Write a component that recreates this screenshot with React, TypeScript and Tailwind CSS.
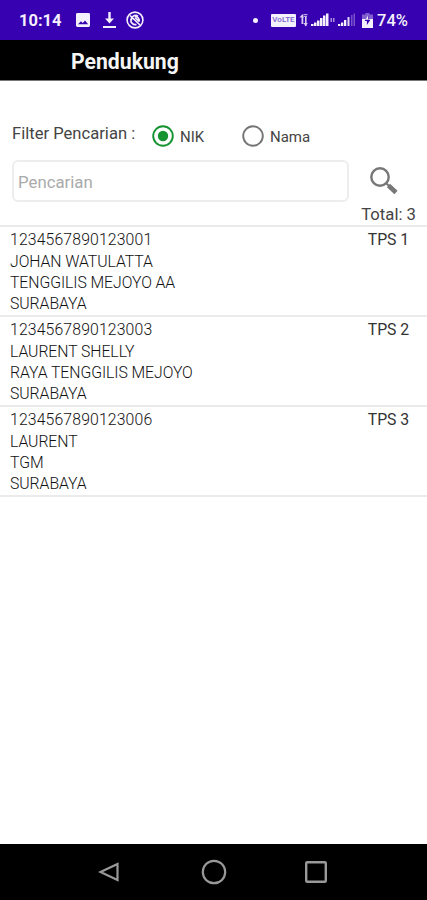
import React from 'react';

interface Supporter {
  nik: string;
  name: string;
  address: string;
  city: string;
  tps: string;
}

const supporters: Supporter[] = [
  {
    nik: '1234567890123001',
    name: 'JOHAN WATULATTA',
    address: 'TENGGILIS MEJOYO AA',
    city: 'SURABAYA',
    tps: 'TPS 1',
  },
  {
    nik: '1234567890123003',
    name: 'LAURENT SHELLY',
    address: 'RAYA TENGGILIS MEJOYO',
    city: 'SURABAYA',
    tps: 'TPS 2',
  },
  {
    nik: '1234567890123006',
    name: 'LAURENT',
    address: 'TGM',
    city: 'SURABAYA',
    tps: 'TPS 3',
  },
];

const StatusBar: React.FC = () => (
  <div className="flex h-10 shrink-0 items-center bg-[#3700b0] pl-[19px] text-[#f4f0fc]">
    <span className="w-[43px] pt-[2px] text-[16.5px] font-bold leading-5 whitespace-nowrap">10:14</span>
    <svg className="ml-3.5 h-[14px] w-[14px]" viewBox="0 0 15 15" fill="currentColor">
      <path
        fillRule="evenodd"
        d="M1.5 0h12A1.5 1.5 0 0 1 15 1.5v12a1.5 1.5 0 0 1-1.5 1.5h-12A1.5 1.5 0 0 1 0 13.5v-12A1.5 1.5 0 0 1 1.5 0ZM2.2 12h10.8L9.7 8 7.2 10.8 5.3 8.8Z"
      />
    </svg>
    <svg className="ml-[13px] h-4 w-[13px]" viewBox="0 0 13 16" fill="currentColor">
      <path d="M5.3 0h2.4v6.5h3.3L6.5 11.5 2 6.5h3.3ZM0 14h13v2H0Z" />
    </svg>
    <svg className="ml-[10px] h-[18px] w-[18px]" viewBox="0 0 18 18" fill="none" stroke="currentColor">
      <circle cx="9" cy="9" r="7.9" strokeWidth="1.6" />
      <path d="M4 4.5 14 14M5.5 9.5a4 4 0 0 1 6.5-4M9 5.5a4 4 0 0 1 4 5M5 8a4.5 4.5 0 0 0 5.5 5.5M9 6.5l4 4" strokeWidth="1.7" />
    </svg>
    <span className="ml-[109px] h-[5px] w-[5px] rounded-full bg-current" />
    <span className="ml-[13px] flex h-[13px] w-[25px] items-center justify-center rounded-[1px] bg-current">
      <span className="text-[8px] font-medium leading-none text-[#7b62cf]">VoLTE</span>
    </span>
    <svg className="ml-[3px] h-4 w-[59px]" viewBox="0 0 59 16" fill="currentColor">
      <path d="M2.5 3h1.8v9H2.5zM.5 5.5 3.4 2l1.6 3.5zM6 5h1.6v9H6zM4.5 11h4.3L6.7 14.5z" opacity=".85" />
      <path d="M4.5 2h4v1.2h-4zM5 4h3v1H5z" opacity=".7" />
      <path d="M12 12h2.5v2H12zM15 10.5h2.5V14H15zM18 8.5h2.5V14H18zM21 6h2.5v8H21zM24 3.5h2.5V14H24zM27 1.5h2.5V14H27z" />
      <path d="M31.5 6h1.5v4h-1.5zM34 6h1.5v4H34z" opacity=".6" />
      <path d="M39 12h2.3v2H39zM42 10.5h2.3V14H42zM45 8h2.3v6H45z" />
      <path d="M48.5 5h2v9h-2z" opacity=".9" />
      <path d="M52 3h1.5v11H52zM54.5 1.5H56V14h-1.5z" opacity=".35" />
    </svg>
    <svg className="ml-[4px] h-[15px] w-[11px]" viewBox="0 0 11 15" fill="currentColor">
      <path d="M3.5 0h4v1.5H11V6H0V1.5h3.5z" opacity=".4" />
      <path d="M0 6h11v9H0z" />
      <path d="M6.3 2.5 2.7 8h2.2v4L8.4 6.8H6.3z" fill="#3700b0" />
      <path d="M6 2.5 3.5 6.8H6z" />
    </svg>
    <span className="ml-[4px] pt-[2px] text-[16.5px] font-medium leading-5 whitespace-nowrap">74%</span>
  </div>
);

const RadioOption: React.FC<{ label: string; checked?: boolean }> = ({ label, checked }) => (
  <div className="flex items-center">
    {checked ? (
      <svg className="h-[22px] w-[22px]" viewBox="0 0 22 22">
        <circle cx="11" cy="11" r="9.8" fill="none" stroke="#169330" strokeWidth="1.9" />
        <circle cx="11" cy="11" r="5.2" fill="#169330" />
      </svg>
    ) : (
      <svg className="h-[22px] w-[22px]" viewBox="0 0 22 22">
        <circle cx="11" cy="11" r="9.8" fill="none" stroke="#757575" strokeWidth="1.9" />
      </svg>
    )}
    <span className="ml-[6px] pt-px text-[15px] leading-5 text-[#444]">{label}</span>
  </div>
);

const SupporterRow: React.FC<{ item: Supporter }> = ({ item }) => (
  <li className="flex h-[90px] justify-between border-b-2 border-[#ebebeb] pt-[2.4px] pr-[18px] pl-[10px] text-[15.8px] leading-[21.3px] font-light tracking-[-0.07px] text-[#111]">
    <div>
      <p className="tracking-[0.13px]">{item.nik}</p>
      <p>{item.name}</p>
      <p>{item.address}</p>
      <p>{item.city}</p>
    </div>
    <span className="font-normal text-[#333]">{item.tps}</span>
  </li>
);

const NavigationBar: React.FC = () => (
  <div className="flex h-14 shrink-0 items-center bg-black pl-[98px] text-[#999]">
    <svg className="h-6 w-[22px]" viewBox="0 0 22 24" fill="none" stroke="currentColor" strokeWidth="2.2">
      <path d="M2.5 12 19.5 4v16Z" />
    </svg>
    <svg className="ml-[81px] h-[26px] w-[26px]" viewBox="0 0 26 26" fill="none" stroke="currentColor" strokeWidth="2.2">
      <circle cx="13" cy="13" r="11.2" />
    </svg>
    <svg className="ml-[77px] h-[24px] w-[24px]" viewBox="0 0 24 24" fill="none" stroke="currentColor" strokeWidth="2.4">
      <rect x="2.2" y="2.2" width="19.6" height="19.6" rx="1" />
    </svg>
  </div>
);

const App: React.FC = () => {
  return (
    <div className="flex h-[900px] w-[427px] flex-col overflow-hidden bg-white font-[Roboto,sans-serif]">
      <StatusBar />
      <header className="flex h-[41px] shrink-0 items-center border-b border-[#777] bg-black pt-[3px] pl-[71px]">
        <h1 className="text-[21.2px] font-bold leading-6 text-[#f5f5f5]">Pendukung</h1>
      </header>

      <main className="flex-1">
        <div className="mt-[44px] flex h-[22px] items-center pl-3">
          <span className="-mt-[4px] w-[140px] text-[16.6px] leading-5 text-[#444]">Filter Pencarian :</span>
          <div className="w-[90px]">
            <RadioOption label="NIK" checked />
          </div>
          <RadioOption label="Nama" />
        </div>
        <div className="mt-[13px] flex items-center pl-3">
          <div className="flex h-[42px] w-[337px] items-center rounded-[6px] border-2 border-[#ededed] pt-[3px] pl-[4px] text-[16.8px] text-[#aaa]">
            Pencarian
          </div>
          <svg className="ml-5 h-[30px] w-[30px]" viewBox="0 0 30 30" fill="none" stroke="#777">
            <circle cx="11" cy="11" r="8.7" strokeWidth="2.4" />
            <path d="m17 17 3 3" strokeWidth="2" />
            <path d="m19.5 19.5 7.5 7" strokeWidth="4.6" />
          </svg>
        </div>
        <div className="flex h-[25px] items-center justify-end border-b-2 border-[#ebebeb] pt-[2px] pr-[11px]">
          <span className="text-[16.7px] leading-5 text-[#444]">Total: 3</span>
        </div>
        <ul>
          {supporters.map((item) => (
            <SupporterRow key={item.nik} item={item} />
          ))}
        </ul>
      </main>

      <NavigationBar />
    </div>
  );
};

export default App;
